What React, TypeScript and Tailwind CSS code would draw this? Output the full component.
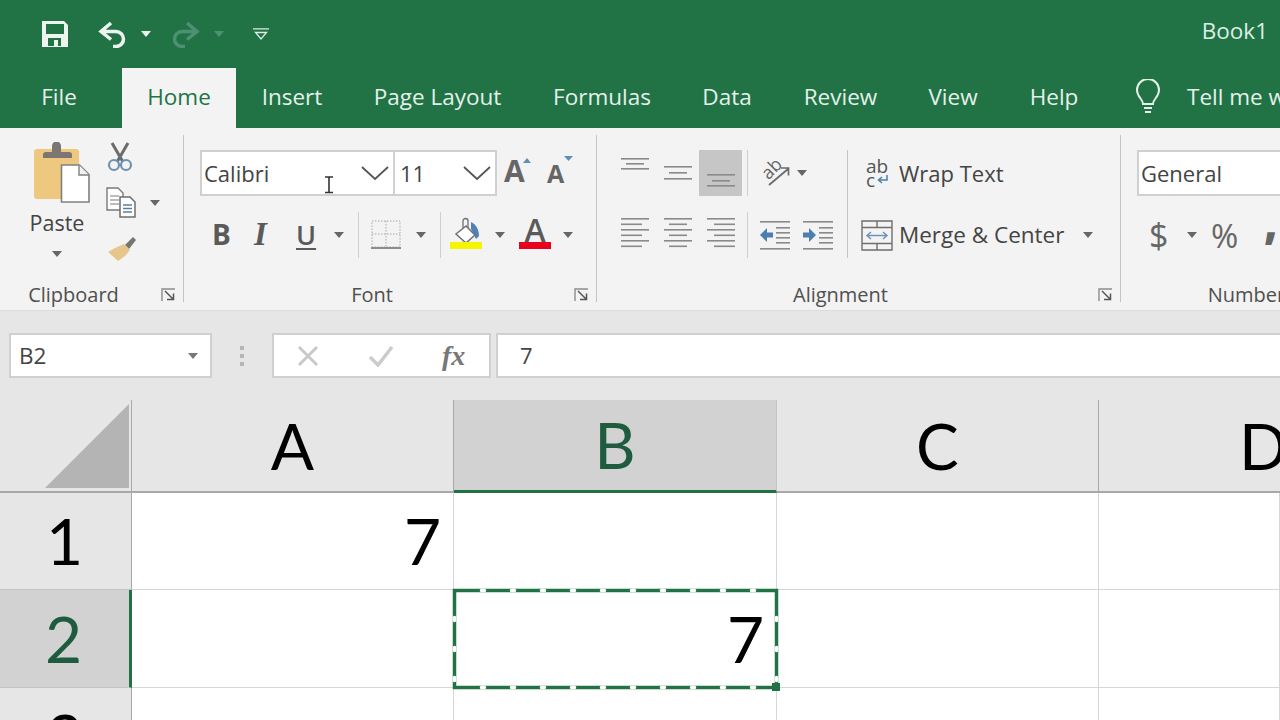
import type { ReactNode } from 'react';

const TABS = [
  { label: 'Insert', width: 'w-[112px]' },
  { label: 'Page Layout', width: 'w-[179px]' },
  { label: 'Formulas', width: 'w-[150px]' },
  { label: 'Data', width: 'w-[100px]' },
  { label: 'Review', width: 'w-[127px]' },
  { label: 'View', width: 'w-[98px]' },
  { label: 'Help', width: 'w-[104px]' },
];

const Caret = ({ className = '' }: { className?: string }) => (
  <svg width="10" height="6" viewBox="0 0 10 6" className={`shrink-0 ${className}`}>
    <path d="M0 0h10L5 6z" fill="currentColor" />
  </svg>
);

const Lines = ({ rows, w = 28, h = 30 }: { rows: number[][]; w?: number; h?: number }) => (
  <svg width={w} height={h} viewBox={`0 0 ${w} ${h}`}>
    {rows.map(([x1, x2, y], i) => (
      <rect key={i} x={x1} y={y} width={x2 - x1} height="1.6" fill="#8a8a8a" />
    ))}
  </svg>
);

const Launcher = () => (
  <svg width="15" height="14" viewBox="0 0 15 14" className="absolute bottom-0 right-[7px]">
    <path d="M1 13V1h13" fill="none" stroke="#8c8c8c" strokeWidth="1.4" />
    <path d="M4 3l8 8M6 11.5h6.5V5.5" fill="none" stroke="#555" strokeWidth="1.5" />
  </svg>
);

function Group({ label, width, children }: { label: string; width: string; children: ReactNode }) {
  return (
    <div className={`${width} flex h-[167px] shrink-0 flex-col border-r border-[#c4c4c4]`}>
      <div className="flex-1">{children}</div>
      <div className="relative h-[14px] pr-[36px] text-center text-[20px] leading-[14px] text-[#505050]">
        {label}
        {label !== 'Number' && <Launcher />}
      </div>
    </div>
  );
}

const PasteIcon = () => (
  <svg width="68" height="62" viewBox="0 0 68 62">
    <rect x="11" y="7" width="45" height="50" rx="3" fill="#edc87e" />
    <path d="M20 13a3 3 0 0 1 3-3h6V4a4 4 0 0 1 9 0v6h8a3 3 0 0 1 3 3v3H20z" fill="#7b7673" />
    <path d="M38.5 23h18l9.5 9.5V60H38.5z" fill="#fff" stroke="#808080" strokeWidth="1.6" />
    <path d="M56 23v10h10" fill="#f2f2f2" stroke="#808080" strokeWidth="1.4" />
  </svg>
);

const ScissorsIcon = () => (
  <svg width="28" height="30" viewBox="0 0 28 30">
    <path d="M6 1l11 19M22 1L11 20" stroke="#6c6c6c" strokeWidth="3" fill="none" />
    <circle cx="8" cy="23" r="5" fill="none" stroke="#6f92b3" strokeWidth="2.2" />
    <circle cx="20" cy="23" r="5" fill="none" stroke="#6f92b3" strokeWidth="2.2" />
  </svg>
);

const CopyIcon = () => (
  <svg width="30" height="31" viewBox="0 0 30 31">
    <path d="M1 1h11l5 5v17H1z" fill="#fff" stroke="#7a7a7a" strokeWidth="1.4" />
    <path d="M4 9h9M4 13h9M4 17h9" stroke="#7a7a7a" strokeWidth="1.2" />
    <path d="M14 10h10l5 5v15H14z" fill="#fff" stroke="#6e6e6e" strokeWidth="1.5" />
    <path d="M17 18h9M17 21.5h9M17 25h9" stroke="#5d7f9f" strokeWidth="1.3" />
  </svg>
);

const BrushIcon = () => (
  <svg width="32" height="28" viewBox="0 0 32 28">
    <path d="M20 10l8-8 3 3-7 9z" fill="#757575" />
    <path d="M19 9l6 6-5 6-7 5L3 17l7-4z" fill="#e6c68b" />
  </svg>
);

const BordersIcon = () => (
  <svg width="30" height="30" viewBox="0 0 30 30">
    <path d="M1 1h28v26H1zM15 1v26M1 14h28" fill="none" stroke="#a8a8a8" strokeWidth="1" strokeDasharray="1.5 1.5" />
    <rect x="0" y="27" width="30" height="2" fill="#8d8d8d" />
  </svg>
);

const FillIcon = () => (
  <svg width="34" height="34" viewBox="0 0 34 34">
    <g transform="translate(0 2)">
      <path d="M7 17L17 9l9 9-9 8z" fill="#fff" stroke="#707070" strokeWidth="1.5" />
      <path d="M14 11V4a2.5 2.5 0 0 1 5 0v7" fill="none" stroke="#707070" strokeWidth="1.3" />
      <path d="M22 5c5 2 8 8 8 14l-3 3-5-10z" fill="#4f81b5" />
    </g>
    <rect x="1" y="27" width="32" height="7" fill="#f5f500" />
  </svg>
);

const OrientIcon = () => (
  <div className="relative h-[30px] w-[30px] shrink-0">
    <span className="absolute left-[-1px] top-[-1px] w-[22px] -rotate-45 text-center text-[18px] font-medium leading-[22px] text-[#666]">ab</span>
    <svg width="30" height="30" viewBox="0 0 30 30" className="absolute left-0 top-0">
      <path d="M8 27L27 11M20 10h7.500v7.500" fill="none" stroke="#6a6a6a" strokeWidth="1.7" />
    </svg>
  </div>
);

const IndentIcon = ({ flip }: { flip?: boolean }) => (
  <svg width="30" height="31" viewBox="0 0 30 31">
    <rect x="0" y="1" width="30" height="1.6" fill="#8a8a8a" />
    <rect x="0" y="28" width="30" height="1.6" fill="#8a8a8a" />
    {[7, 12, 17, 22].map((y) => (
      <rect key={y} x="16" y={y} width="14" height="1.6" fill="#8a8a8a" />
    ))}
    <path d={flip ? 'M0 12.5h6V8l7 7-7 7v-4.5H0z' : 'M13 12.5H7V8l-7 7 7 7v-4.5h6z'} fill="#4a7fb0" />
  </svg>
);

const MergeIcon = () => (
  <svg width="32" height="31" viewBox="0 0 32 31">
    <path d="M1 1h30v29H1zM1 7.5h30M1 23.5h30M16 1v6.5M16 23.5V30" fill="none" stroke="#6e6e6e" strokeWidth="1.4" />
    <path d="M6 15.5h20M10 12l-4 3.5 4 3.5M22 12l4 3.5-4 3.5" fill="none" stroke="#6f93b5" strokeWidth="1.5" />
  </svg>
);

const Sep = () => <div className="h-[46px] w-px shrink-0 bg-[#cfcfcf]" />;

const ALIGN_LEFT = [[0, 28, 0], [0, 21, 5.5], [0, 28, 11], [0, 21, 16.5], [0, 28, 22], [0, 21, 27.5]];
const ALIGN_CENTER = [[0, 28, 0], [5, 23, 5.5], [0, 28, 11], [5, 23, 16.5], [0, 28, 22], [5, 23, 27.5]];
const ALIGN_RIGHT = [[0, 28, 0], [7, 28, 5.5], [0, 28, 11], [7, 28, 16.5], [0, 28, 22], [7, 28, 27.5]];

function AlignButton({ rows, h, active }: { rows: number[][]; h?: number; active?: boolean }) {
  return (
    <div className={`flex h-[46px] w-[43px] shrink-0 items-center justify-center ${active ? 'bg-[#c6c6c6]' : ''}`}>
      <Lines rows={rows} h={h} />
    </div>
  );
}

function ColumnHeader({ label, selected }: { label: string; selected?: boolean }) {
  return (
    <div
      className={`flex items-center justify-center border-r text-[64px] leading-none ${
        selected
          ? 'border-b-[3px] border-r-[#c4c4c4] border-b-[#217346] bg-[#d2d2d2] text-[#1f5c3f]'
          : 'border-b-2 border-r-[#a8a8a8] border-b-[#a8a8a8] bg-[#e6e6e6] text-black'
      }`}
    >
      {label}
    </div>
  );
}

function RowHeader({ label, selected }: { label: string; selected?: boolean }) {
  return (
    <div
      className={`flex items-center justify-center pr-[2px] text-[64px] leading-none ${
        selected
          ? 'border-b border-r-[3px] border-b-[#c4c4c4] border-r-[#217346] bg-[#d2d2d2] text-[#1f5c3f]'
          : 'border-b border-r border-b-[#c4c4c4] border-r-[#a8a8a8] bg-[#e6e6e6] text-black'
      }`}
    >
      {label}
    </div>
  );
}

const Cell = ({ value }: { value?: string }) => (
  <div className="flex items-center justify-end border-b border-r border-[#d6d6d6] pr-[12px] text-[64px] leading-none text-black">
    {value}
  </div>
);

export default function App() {
  return (
    <div className="flex h-[720px] w-[1280px] flex-col overflow-hidden bg-white font-['Open_Sans',sans-serif]">
      {/* title bar */}
      <div className="flex h-[68px] shrink-0 items-center bg-[#217346] pl-[42px]">
        <svg width="26" height="26" viewBox="0 0 26 26">
          <path fillRule="evenodd" d="M0 0h22l4 4v22H0zM4 3v10h18V3zM6 17v8h13v-8zM12 19h4v6h-4z" fill="#eef5f1" />
        </svg>
        <svg width="30" height="27" viewBox="0 0 30 27" className="ml-[30px]">
          <path d="M13 2L3 10.5l10 8M3 10.5h15a7.5 7.5 0 0 1 0 15h-3" fill="none" stroke="#eef5f1" strokeWidth="3.5" />
        </svg>
        <Caret className="ml-[13px] text-[#eef5f1]" />
        <svg width="30" height="27" viewBox="0 0 30 27" className="ml-[19px]">
          <path d="M17 2l10 8.5-10 8M27 10.5H12a7.5 7.5 0 0 0 0 15h3" fill="none" stroke="#4d9172" strokeWidth="3.5" />
        </svg>
        <Caret className="ml-[14px] text-[#4d9172]" />
        <svg width="16" height="12" viewBox="0 0 16 12" className="ml-[29px]">
          <path d="M0 .8h16M2.5 4.5h11L8 11z" fill="none" stroke="#dcebe3" strokeWidth="1.3" />
        </svg>
        <span className="ml-auto pb-[6px] pr-[12px] text-[22.5px] text-[#dcefe5]">Book1</span>
      </div>

      {/* tabs */}
      <div className="flex h-[60px] shrink-0 items-center bg-[#217346] text-[22.5px] text-[#e4f1ea]">
        <div className="w-[122px] shrink-0 pb-[3px] pr-[4px] text-center">File</div>
        <div className="flex h-full w-[114px] shrink-0 items-center justify-center bg-[#f3f3f3] pb-[3px] text-[#217346]">Home</div>
        {TABS.map((tab) => (
          <div key={tab.label} className={`${tab.width} shrink-0 pb-[3px] text-center`}>{tab.label}</div>
        ))}
        <svg width="26" height="34" viewBox="0 0 26 34" className="mb-[4px] ml-[29px] shrink-0">
          <path d="M8 25c0-5-6-7-6-14a11 11 0 0 1 22 0c0 7-6 9-6 14z" fill="none" stroke="#e4f1ea" strokeWidth="2" />
          <path d="M9 29h8M10 33h6" stroke="#e4f1ea" strokeWidth="2" />
        </svg>
        <span className="ml-[26px] whitespace-nowrap pb-[3px]">Tell me what</span>
      </div>

      {/* ribbon */}
      <div className="flex h-[182px] shrink-0 bg-[#f3f3f3] pt-[7px] text-[#555]">
        <Group label="Clipboard" width="w-[184px]">
          <div className="flex pt-[7px]">
            <div className="flex w-[114px] shrink-0 flex-col items-center">
              <PasteIcon />
              <span className="mt-[1px] text-[21.5px] leading-[36px] text-[#444]">Paste</span>
              <Caret className="mt-[10px] text-[#666]" />
            </div>
            <div className="ml-[-8px] flex flex-col">
              <ScissorsIcon />
              <div className="mt-[15px] flex items-center">
                <CopyIcon />
                <Caret className="ml-[14px] text-[#666]" />
              </div>
              <div className="ml-[-1px] mt-[17px]"><BrushIcon /></div>
            </div>
          </div>
        </Group>

        <Group label="Font" width="w-[413px]">
          <div className="pl-[16px] pt-[15px]">
            <div className="flex h-[46px] items-center">
              <div className="relative flex h-[46px] w-[195px] shrink-0 items-center justify-between border-2 border-[#d0d0d0] bg-white pl-[2px] pr-[4px] text-[22px] text-[#444]">
                Calibri
                <svg width="28" height="15" viewBox="0 0 28 15">
                  <path d="M1 1l13 12L27 1" fill="none" stroke="#555" strokeWidth="1.8" />
                </svg>
                <svg width="10" height="18" viewBox="0 0 10 18" className="absolute left-[122px] top-[24px]">
                  <path d="M1 1h8M5 1v15M1 16.5h8" fill="none" stroke="#333" strokeWidth="1.6" />
                </svg>
              </div>
              <div className="flex h-[46px] w-[102px] shrink-0 items-center justify-between border-2 border-l-0 border-[#d0d0d0] bg-white pl-[5px] pr-[4px] text-[22px] text-[#444]">
                11
                <svg width="28" height="15" viewBox="0 0 28 15">
                  <path d="M1 1l13 12L27 1" fill="none" stroke="#555" strokeWidth="1.8" />
                </svg>
              </div>
              <div className="relative mb-[4px] ml-[7px] w-[32px] text-[30px] font-bold leading-none text-[#666]">
                A
                <svg width="8" height="5" viewBox="0 0 8 5" className="absolute left-[19px] top-[2px]">
                  <path d="M0 5h8L4 0z" fill="#5f8fb8" />
                </svg>
              </div>
              <div className="relative mb-[2px] ml-[11px] w-[30px] pt-[3px] text-[25px] font-bold leading-none text-[#666]">
                A
                <svg width="9" height="5" viewBox="0 0 9 5" className="absolute left-[17px] top-[-2px]">
                  <path d="M0 0h9L4.5 5z" fill="#5f8fb8" />
                </svg>
              </div>
            </div>
            <div className="mt-[16px] flex h-[46px] items-center text-[#5a5a5a]">
              <span className="ml-[12px] w-[42px] pb-[2px] text-[28px] font-bold leading-none">B</span>
              <span className="w-[42px] pb-[2px] font-['Liberation_Serif',serif] text-[33px] font-bold italic leading-none">I</span>
              <span className="w-[38px] pb-[2px] text-[27px] font-semibold leading-none underline decoration-2 underline-offset-[3px]">U</span>
              <Caret className="text-[#666]" />
              <div className="ml-[14px]"><Sep /></div>
              <div className="ml-[12px]"><BordersIcon /></div>
              <Caret className="ml-[15px] text-[#666]" />
              <div className="ml-[14px]"><Sep /></div>
              <div className="mb-[6px] ml-[8px]"><FillIcon /></div>
              <Caret className="ml-[12px] text-[#666]" />
              <div className="relative mb-[6px] ml-[14px] h-[34px] w-[32px] text-center text-[32px] font-semibold leading-[30px] text-[#5a5a5a]">
                A
                <div className="absolute bottom-0 left-0 h-[7px] w-full bg-[#e8001c]" />
              </div>
              <Caret className="ml-[12px] text-[#666]" />
            </div>
          </div>
        </Group>

        <Group label="Alignment" width="w-[524px]">
          <div className="flex pt-[15px]">
            <div className="w-[251px] shrink-0 border-r border-[#c4c4c4] pl-[16px]">
              <div className="flex h-[46px] items-center">
                <AlignButton rows={[[0, 28, 0], [5, 23, 5], [0, 28, 10]]} />
                <AlignButton rows={[[0, 28, 8], [5, 23, 14], [0, 28, 20]]} />
                <AlignButton active rows={[[0, 28, 16], [5, 23, 22], [0, 28, 27]]} />
                <div className="ml-[5px]"><Sep /></div>
                <div className="ml-[13px]"><OrientIcon /></div>
                <Caret className="ml-[6px] text-[#666]" />
              </div>
              <div className="mt-[16px] flex h-[46px] items-center">
                <AlignButton h={34} rows={ALIGN_LEFT} />
                <AlignButton h={34} rows={ALIGN_CENTER} />
                <AlignButton h={34} rows={ALIGN_RIGHT} />
                <div className="ml-[5px]"><Sep /></div>
                <div className="ml-[12px]"><IndentIcon /></div>
                <div className="ml-[13px]"><IndentIcon flip /></div>
              </div>
            </div>
            <div className="flex-1 pl-[13px] text-[22px] text-[#444]">
              <div className="flex h-[46px] items-center">
                <div className="ml-[5px] flex w-[33px] shrink-0 flex-col text-[19px] leading-[14px] text-[#555]">
                  <span>ab</span>
                  <span className="flex items-center">
                    c
                    <svg width="11" height="10" viewBox="0 0 11 10" className="ml-[2px]">
                      <path d="M10 0v5H2M5 2L1.5 5 5 8" fill="none" stroke="#4a7fb0" strokeWidth="1.5" />
                    </svg>
                  </span>
                </div>
                Wrap Text
              </div>
              <div className="mt-[16px] flex h-[46px] items-center">
                <MergeIcon />
                <span className="ml-[6px] text-[22.5px]">Merge &amp; Center</span>
                <Caret className="ml-[19px] text-[#666]" />
              </div>
            </div>
          </div>
        </Group>

        <Group label="Number" width="w-[288px]">
          <div className="pl-[16px] pt-[15px]">
            <div className="flex h-[46px] w-[220px] items-center border-2 border-[#d0d0d0] bg-white pl-[2px] text-[22px] text-[#444]">
              General
            </div>
            <div className="mt-[16px] flex h-[46px] items-center text-[#666]">
              <span className="ml-[12px] w-[38px] text-[34px] leading-none">$</span>
              <Caret className="text-[#666]" />
              <span className="ml-[14px] w-[53px] text-[33px] leading-none">%</span>
              <span className="pb-[26px] text-[44px] font-extrabold leading-none">,</span>
            </div>
          </div>
        </Group>
      </div>

      {/* formula bar */}
      <div className="flex h-[90px] shrink-0 border-t border-[#dcdcdc] bg-[#e6e6e6] pl-[9px] pt-[22px]">
        <div className="flex h-[45px] w-[203px] shrink-0 items-center justify-between border-2 border-[#d0d0d0] bg-white pl-[8px] pr-[12px] text-[22.5px] text-[#444]">
          B2
          <Caret className="text-[#777]" />
        </div>
        <div className="flex h-[45px] w-[60px] shrink-0 flex-col items-center justify-center gap-[4px]">
          <div className="size-[4px] bg-[#b5b5b5]" />
          <div className="size-[4px] bg-[#b5b5b5]" />
          <div className="size-[4px] bg-[#b5b5b5]" />
        </div>
        <div className="flex h-[45px] w-[219px] shrink-0 items-center border-2 border-[#d0d0d0] bg-white pl-[23px]">
          <svg width="22" height="22" viewBox="0 0 22 22">
            <path d="M2 2l18 18M20 2L2 20" stroke="#c9c9c9" strokeWidth="3" />
          </svg>
          <svg width="26" height="22" viewBox="0 0 26 22" className="ml-[49px]">
            <path d="M2 12l8 8L24 2" fill="none" stroke="#cccccc" strokeWidth="3.5" />
          </svg>
          <span className="ml-[48px] font-['Liberation_Serif',serif] text-[28px] font-bold italic leading-none text-[#777]">fx</span>
        </div>
        <div className="ml-[5px] flex h-[45px] flex-1 items-center border-2 border-r-0 border-[#d0d0d0] bg-white pl-[22px] text-[22px] text-[#444]">
          7
        </div>
      </div>

      {/* sheet */}
      <div className="relative grid flex-1 grid-cols-[132px_322px_323px_322px_1fr] grid-rows-[93px_97px_98px_98px] bg-white font-['Lato',sans-serif]">
        <div className="flex items-end justify-end border-b-2 border-r border-[#a8a8a8] bg-[#e6e6e6] pb-[3px] pr-[2px]">
          <svg width="84" height="84" viewBox="0 0 84 84">
            <path d="M84 0v84H0z" fill="#b4b4b4" />
          </svg>
        </div>
        <ColumnHeader label="A" />
        <ColumnHeader label="B" selected />
        <ColumnHeader label="C" />
        <div className="flex items-center overflow-hidden border-b-2 border-[#a8a8a8] bg-[#e6e6e6] pl-[140px] text-[64px] leading-none text-black">D</div>

        <RowHeader label="1" />
        <Cell value="7" /><Cell /><Cell /><Cell />

        <RowHeader label="2" selected />
        <Cell /><Cell value="7" /><Cell /><Cell />

        <RowHeader label="3" />
        <Cell /><Cell /><Cell /><Cell />

        {/* copied range marquee */}
        <svg width="328" height="103" viewBox="0 0 328 103" className="absolute left-[452px] top-[188px]">
          <rect x="2.5" y="2.5" width="322" height="97" fill="none" stroke="#217346" strokeWidth="3.5" />
          {['M2.5 2.5H324.5', 'M2.5 99.5H324.5', 'M2.5 2.5V99.5', 'M324.5 2.5V99.5'].map((d) => (
            <path key={d} d={d} fill="none" stroke="#fff" strokeWidth="3.5" strokeLinecap="round" strokeDasharray="3 27" strokeDashoffset="-27" />
          ))}
          <rect x="320" y="95" width="8" height="8" fill="#217346" />
        </svg>
      </div>
    </div>
  );
}
